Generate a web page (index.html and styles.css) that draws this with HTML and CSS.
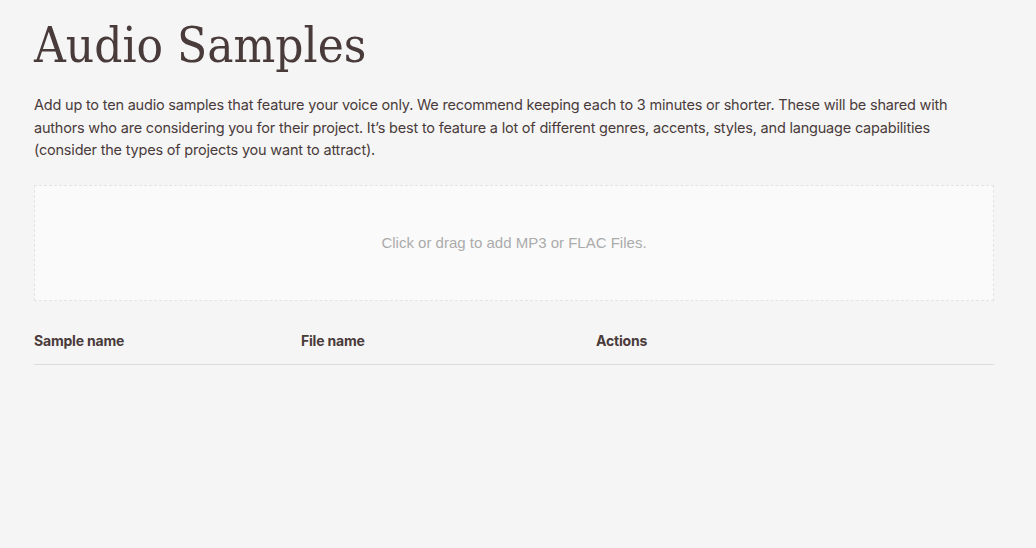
FILE: index.html
```html
<!DOCTYPE html>
<html lang="en">
<head>
<meta charset="utf-8">
<title>Audio Samples</title>
<link rel="stylesheet" href="styles.css">
</head>
<body>
<main class="page">
  <h1 class="title">Audio Samples</h1>
  <p class="intro">Add up to ten audio samples that feature your voice only. We recommend keeping each to 3 minutes or shorter. These will be shared with authors who are considering you for their project. It’s best to feature a lot of different genres, accents, styles, and language capabilities (consider the types of projects you want to attract).</p>
  <div class="dropzone">Click or drag to add MP3 or FLAC Files.</div>
  <div class="table-head">
    <div class="th">Sample name</div>
    <div class="th">File name</div>
    <div class="th">Actions</div>
  </div>
</main>
</body>
</html>
```

FILE: styles.css
```css
html, body {
  margin: 0;
  padding: 0;
  background: #f5f5f5;
}
body {
  color: #4a3b3b;
  font-family: "Inter", "Noto Sans", sans-serif;
}
.page {
  width: 960px;
  padding: 14px 0 0 34px;
}
.title {
  margin: 0;
  font-family: "DejaVu Serif", serif;
  font-stretch: condensed;
  font-weight: 300;
  font-size: 49px;
  line-height: 64px;
  color: #4a3b3b;
}
.intro {
  margin: 16px 0 0;
  font-size: 14.5px;
  line-height: 22.5px;
  letter-spacing: -0.2px;
  color: #4a3b3b;
}
.dropzone {
  margin-top: 23px;
  height: 114px;
  border: 1px dashed #e3e3e3;
  background: #fafafa;
  display: flex;
  align-items: center;
  justify-content: center;
  font-family: "Liberation Sans", Arial, sans-serif;
  font-size: 15px;
  color: #ababab;
}
.table-head {
  display: grid;
  grid-template-columns: 267px 295px 1fr;
  margin-top: 30px;
  padding-bottom: 13px;
  border-bottom: 1px solid #dcdcdc;
}
.th {
  font-size: 14px;
  font-weight: 700;
  line-height: 20px;
  letter-spacing: -0.2px;
  color: #4a3b3b;
}
```
